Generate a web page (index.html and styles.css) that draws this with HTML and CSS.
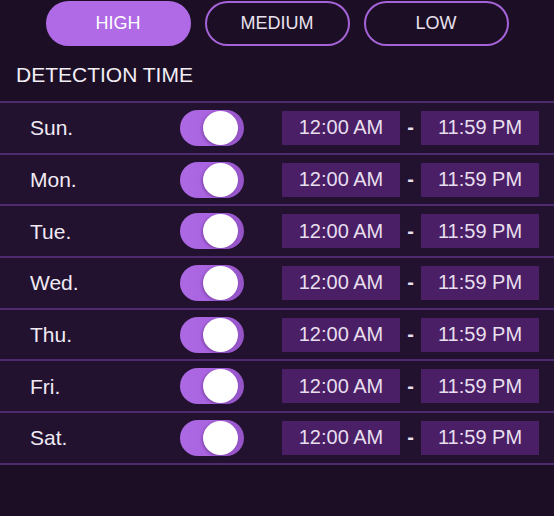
FILE: index.html
```html
<!DOCTYPE html>
<html>
<head>
<meta charset="utf-8">
<link rel="stylesheet" href="styles.css">
</head>
<body>
<div class="segments">
  <div class="seg seg-active">HIGH</div>
  <div class="seg">MEDIUM</div>
  <div class="seg">LOW</div>
</div>
<div class="title">DETECTION TIME</div>
<div class="list">
  <div class="row"><span class="day">Sun.</span><span class="toggle"><span class="knob"></span></span><span class="time start">12:00 AM</span><span class="dash">-</span><span class="time">11:59 PM</span></div>
  <div class="row"><span class="day">Mon.</span><span class="toggle"><span class="knob"></span></span><span class="time start">12:00 AM</span><span class="dash">-</span><span class="time">11:59 PM</span></div>
  <div class="row"><span class="day">Tue.</span><span class="toggle"><span class="knob"></span></span><span class="time start">12:00 AM</span><span class="dash">-</span><span class="time">11:59 PM</span></div>
  <div class="row"><span class="day">Wed.</span><span class="toggle"><span class="knob"></span></span><span class="time start">12:00 AM</span><span class="dash">-</span><span class="time">11:59 PM</span></div>
  <div class="row"><span class="day">Thu.</span><span class="toggle"><span class="knob"></span></span><span class="time start">12:00 AM</span><span class="dash">-</span><span class="time">11:59 PM</span></div>
  <div class="row"><span class="day">Fri.</span><span class="toggle"><span class="knob"></span></span><span class="time start">12:00 AM</span><span class="dash">-</span><span class="time">11:59 PM</span></div>
  <div class="row"><span class="day">Sat.</span><span class="toggle"><span class="knob"></span></span><span class="time start">12:00 AM</span><span class="dash">-</span><span class="time">11:59 PM</span></div>
</div>
</body>
</html>
```
FILE: styles.css
```css
html, body {
  margin: 0;
  padding: 0;
}
body {
  width: 554px;
  height: 516px;
  background: #1c0e25;
  font-family: "Liberation Sans", Arial, sans-serif;
  color: #f1eaf4;
  overflow: hidden;
}
.segments {
  display: flex;
  justify-content: center;
  gap: 14px;
  padding-top: 1px;
}
.seg {
  box-sizing: border-box;
  width: 145px;
  height: 45px;
  border-radius: 23px;
  border: 2px solid #a463d6;
  display: flex;
  align-items: center;
  justify-content: center;
  font-size: 18px;
  color: #e9e1ee;
}
.seg-active {
  background: #b06ae5;
  border-color: #b06ae5;
  color: #ffffff;
}
.title {
  margin: 17px 0 0 16px;
  font-size: 21px;
  line-height: 24px;
  height: 24px;
  color: #f3eef6;
}
.list {
  margin-top: 14px;
  border-bottom: 2px solid #4d2b6d;
  background: #221230;
}
.row {
  box-sizing: border-box;
  height: 51.7px;
  border-top: 2px solid #4d2b6d;
  display: grid;
  grid-template-columns: 150px 64px 38px 118px 21px 118px;
  align-items: center;
  padding-left: 30px;
}
.day {
  grid-column: 1;
  font-size: 21px;
  padding-top: 1px;
  color: #f1eaf4;
}
.toggle {
  grid-column: 2;
  position: relative;
  width: 64px;
  height: 36px;
  border-radius: 18px;
  background: linear-gradient(90deg, #ad68e4 0%, #a862df 60%, #9453c6 100%);
}
.knob {
  position: absolute;
  top: 1px;
  left: 23px;
  width: 35px;
  height: 34px;
  border-radius: 50%;
  background: #ffffff;
  box-shadow: -1px 1px 3px rgba(40, 10, 60, 0.35);
}
.time {
  grid-column: 6;
  height: 34px;
  background: #4a1f66;
  display: flex;
  align-items: center;
  justify-content: center;
  font-size: 20px;
  color: #e8dfee;
  white-space: nowrap;
}
.time.start {
  grid-column: 4;
}
.dash {
  grid-column: 5;
  text-align: center;
  font-size: 20px;
  font-weight: bold;
  color: #e8dfee;
}
```
